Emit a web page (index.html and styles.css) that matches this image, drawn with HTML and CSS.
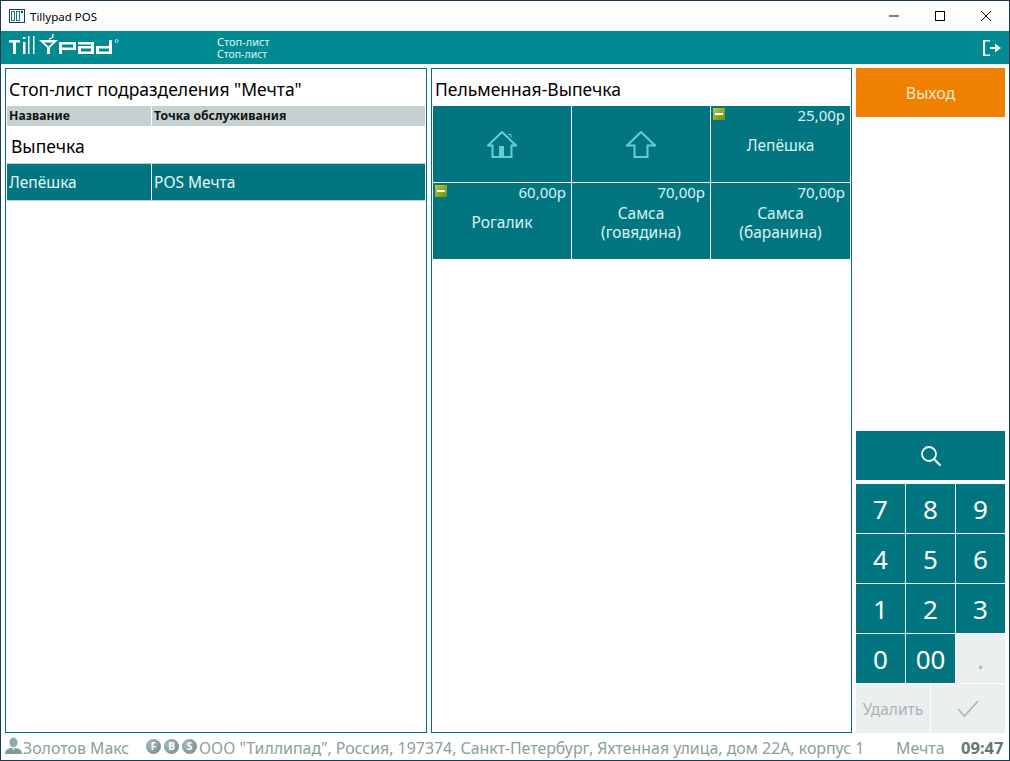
FILE: index.html
```html
<!DOCTYPE html>
<html lang="ru">
<head>
    <meta charset="UTF-8">
    <title>Tillypad POS</title>
    <link rel="stylesheet" href="styles.css">
</head>
<body>
    <div class="window">
        <div class="titlebar">
            <svg class="app-icon" width="16" height="14" viewBox="0 0 16 14">
                <rect x="0.5" y="0.5" width="15" height="13" fill="none" stroke="#1b3a52"/>
                <rect x="2.500" y="2.500" width="3" height="9" fill="none" stroke="#0e7c86"/>
                <rect x="7.500" y="2.500" width="3" height="9" fill="none" stroke="#0e7c86"/>
                <rect x="12" y="2" width="2" height="2" fill="#1b3a52"/>
            </svg>
            <span class="app-name">Tillypad POS</span>
            <div class="win-buttons">
                <svg width="46" height="30" viewBox="0 0 46 30"><path d="M18 15h10" stroke="#000"/></svg>
                <svg width="46" height="30" viewBox="0 0 46 30"><rect x="18.5" y="10.5" width="9" height="9" fill="none" stroke="#000"/></svg>
                <svg width="46" height="30" viewBox="0 0 46 30"><path d="M18 10l10 10M28 10l-10 10" stroke="#000"/></svg>
            </div>
        </div>

        <div class="topbar">
            <svg class="logo" width="110" height="21" viewBox="0 0 110 21" fill="#fff">
                <path d="M0 6h11v2.500H7V20H4V8.500H0z"/>
                <rect x="14" y="8" width="2.500" height="12"/>
                <rect x="14" y="3" width="2.500" height="2"/>
                <rect x="19" y="2" width="1.500" height="18"/>
                <rect x="24" y="2" width="1.500" height="18"/>
                <path d="M30 6h19l-8 7.500V20h-3v-6.500zM35 8.500l4.500 4 4.500-4z" fill-rule="evenodd"/>
                <path d="M40 4.500l3-1.500V0h1.500v3.500L40 6z"/>
                <path d="M50 8h17v8H53v4h-3zM53 10.500v3h11v-3z" fill-rule="evenodd"/>
                <path d="M69 8h16v12H69v-8h13v-1.500H69zM72 14.500v3h10v-3z" fill-rule="evenodd"/>
                <path d="M87 12h13V6h3v14H87zM90 14.500v3h10v-3z" fill-rule="evenodd"/>
                <circle cx="107.500" cy="7" r="1.500" fill="none" stroke="#fff" stroke-width="0.700"/>
            </svg>
            <div class="crumbs">
                <div>Стоп-лист</div>
                <div class="crumb-sub">Стоп-лист</div>
            </div>
            <svg class="logout" width="18" height="16" viewBox="0 0 18 16" fill="#fff">
                <path d="M0 0h7v1.500H2v13h5V16H0z"/>
                <path d="M7 7h5V3.500L18 8l-6 4.500V9H7z"/>
            </svg>
        </div>

        <div class="main">
            <section class="panel">
                <h2 class="panel-title">Стоп-лист подразделения "Мечта"</h2>
                <div class="tbl-head">
                    <div>Название</div>
                    <div>Точка обслуживания</div>
                </div>
                <div class="group-name">Выпечка</div>
                <div class="tbl-row">
                    <div>Лепёшка</div>
                    <div>POS Мечта</div>
                </div>
            </section>

            <section class="panel">
                <h2 class="panel-title">Пельменная-Выпечка</h2>
                <div class="tiles">
                    <div class="tile">
                        <svg class="tile-icon" width="30" height="28" viewBox="0 0 30 28" fill="none" stroke="#66cdd5" stroke-width="2">
                            <path d="M1 14.500L15 1l14 13.500h-4.500V26h-19V14.500z"/>
                            <rect x="12" y="15" width="5" height="11" fill="#66cdd5" stroke="none"/>
                            <path d="M21 3.500h3v3" stroke-width="1"/>
                        </svg>
                    </div>
                    <div class="tile">
                        <svg class="tile-icon" width="30" height="28" viewBox="0 0 30 28" fill="none" stroke="#66cdd5" stroke-width="2">
                            <path d="M1 14.500L15 1l14 13.500h-7.500V26h-13V14.500z"/>
                        </svg>
                    </div>
                    <div class="tile">
                        <span class="stop-mark"></span>
                        <span class="price">25,00р</span>
                        <span class="tile-name">Лепёшка</span>
                    </div>
                    <div class="tile">
                        <span class="stop-mark"></span>
                        <span class="price">60,00р</span>
                        <span class="tile-name">Рогалик</span>
                    </div>
                    <div class="tile">
                        <span class="price">70,00р</span>
                        <span class="tile-name">Самса<br>(говядина)</span>
                    </div>
                    <div class="tile">
                        <span class="price">70,00р</span>
                        <span class="tile-name">Самса<br>(баранина)</span>
                    </div>
                </div>
            </section>

            <aside class="side">
                <button class="exit-btn">Выход</button>
                <button class="search-btn">
                    <svg width="22" height="22" viewBox="0 0 22 22" fill="none" stroke="#fff">
                        <circle cx="9" cy="9" r="7" stroke-width="1.800"/>
                        <path d="M14 14l6.500 6.500" stroke-width="2.200"/>
                    </svg>
                </button>
                <div class="numpad">
                    <button>7</button><button>8</button><button>9</button>
                    <button>4</button><button>5</button><button>6</button>
                    <button>1</button><button>2</button><button>3</button>
                    <button>0</button><button>00</button><button class="off">.</button>
                </div>
                <div class="actions">
                    <button class="off del">Удалить</button>
                    <button class="off">
                        <svg width="22" height="18" viewBox="0 0 22 18" fill="none" stroke="#a9b5b5" stroke-width="1.600">
                            <path d="M1 9l6.500 7L21 1"/>
                        </svg>
                    </button>
                </div>
            </aside>
        </div>

        <div class="statusbar">
            <svg class="user-icon" width="17" height="17" viewBox="0 0 17 17">
                <path d="M0 17c0-3.500 2-5 6-6h5c4 1 6 2.500 6 6z" fill="#7f9a9a"/>
                <path d="M7 11h3l-1.500 3z" fill="#d5e0e0"/>
                <ellipse cx="8.500" cy="5.500" rx="4" ry="5" fill="#93abab"/>
            </svg>
            <span class="user">Золотов Макс</span>
            <span class="flags">
                <span class="flag">F</span><span class="flag">B</span><span class="flag">S</span>
            </span>
            <span class="address">ООО "Тиллипад", Россия, 197374, Санкт-Петербург, Яхтенная улица, дом 22А, корпус 1</span>
            <span class="place">Мечта</span>
            <span class="clock">09:47</span>
        </div>
    </div>
</body>
</html>
```

FILE: styles.css
```css
* {
    box-sizing: border-box;
}

body {
    margin: 0;
    font-family: "Noto Sans", sans-serif;
    background-color: #fff;
}

.window {
    width: 1010px;
    height: 761px;
    border: 1px solid #1b3a52;
    display: flex;
    flex-direction: column;
    overflow: hidden;
}

.titlebar {
    height: 30px;
    display: flex;
    align-items: center;
    padding-left: 8px;
    background-color: #fff;
}

.app-name {
    font-size: 11.5px;
    margin-left: 5px;
    color: #000;
}

.win-buttons {
    margin-left: auto;
    display: flex;
}

.win-buttons svg {
    display: block;
}

.topbar {
    height: 33px;
    background-color: #008b92;
    display: flex;
    align-items: center;
    color: #fff;
}

.logo {
    margin-left: 8px;
    margin-bottom: 6px;
}

.crumbs {
    margin-left: 98px;
    font-size: 11px;
    line-height: 13px;
    color: #e4f4f4;
}

.crumb-sub {
    font-size: 10.5px;
}

.logout {
    margin-left: auto;
    margin-right: 8px;
}

.main {
    flex: 1;
    display: flex;
    padding: 4px 4px 2px 4px;
    gap: 4px;
    min-height: 0;
}

.panel {
    width: 422px;
    border: 1px solid #00707a;
    padding: 1px;
    display: flex;
    flex-direction: column;
}

.panel + .panel {
    width: 421px;
}

.panel-title {
    margin: 0;
    height: 36px;
    padding: 8px 0 0 2px;
    font-size: 17.5px;
    line-height: 22px;
    font-weight: 400;
    color: #000;
    white-space: nowrap;
}

.tbl-head {
    display: flex;
    height: 20px;
    background-color: #c5d1d1;
    font-size: 12.2px;
    font-weight: 700;
    line-height: 20px;
    color: #111;
}

.tbl-head div:first-child,
.tbl-row div:first-child {
    width: 145px;
    border-right: 1px solid #fff;
}

.tbl-head div,
.tbl-row div {
    padding-left: 2px;
}

.group-name {
    height: 37px;
    padding-left: 4px;
    font-size: 17.5px;
    line-height: 40px;
    color: #000;
}

.tbl-row {
    display: flex;
    height: 38px;
    background-color: #017680;
    border-top: 1px solid #b9cfd0;
    border-bottom: 1px solid #b9cfd0;
    font-size: 15.5px;
    line-height: 36px;
    color: #e4f6f6;
}

.tiles {
    display: grid;
    grid-template-columns: 138px 138px 139px;
    grid-template-rows: 76px 76px;
    gap: 1px;
}

.tile {
    position: relative;
    background-color: #017680;
    color: #d9f2f3;
    display: flex;
    align-items: center;
    justify-content: center;
    text-align: center;
}

.tile-icon {
    margin-top: 1px;
}

.price {
    position: absolute;
    top: 0;
    right: 5px;
    font-size: 15px;
    line-height: 19px;
}

.tile-name {
    font-size: 15.5px;
    line-height: 19px;
    margin-top: 3px;
}

.stop-mark {
    position: absolute;
    top: 2px;
    left: 2px;
    width: 12px;
    height: 12px;
    background: linear-gradient(135deg, #b4cc3c, #6f8a12);
}

.stop-mark::after {
    content: "";
    position: absolute;
    left: 2px;
    top: 5px;
    width: 8px;
    height: 2px;
    background-color: #fff;
}

button {
    font-family: inherit;
    border: none;
    padding: 0;
    color: #fff;
    background-color: #017680;
}

.side {
    flex: 1;
    display: flex;
    flex-direction: column;
}

.exit-btn {
    height: 49px;
    background-color: #f08000;
    color: #fbe6cf;
    font-size: 16px;
}

.search-btn {
    margin-top: auto;
    height: 49px;
    display: flex;
    align-items: center;
    justify-content: center;
}

.numpad {
    margin-top: 4px;
    display: grid;
    grid-template-columns: 49px 49px 49px;
    grid-auto-rows: 49px;
    gap: 1px;
}

.numpad button {
    font-size: 26px;
    padding-top: 1px;
}

.actions {
    margin-top: 1px;
    display: grid;
    grid-template-columns: 74px 74px;
    height: 49px;
    gap: 1px;
}

.off {
    background-color: #ebefef;
    color: #a9b5b5;
    display: flex;
    align-items: center;
    justify-content: center;
}

.del {
    font-size: 15.5px;
}

.statusbar {
    height: 25px;
    display: flex;
    align-items: center;
    padding: 0 4px 0 4px;
    font-size: 15.9px;
    color: #8ba0a0;
    white-space: nowrap;
    background-color: #fff;
}

.user-icon {
    margin-top: -4px;
}

.user {
    margin-left: 1px;
    width: 123px;
}

.flags {
    display: flex;
    gap: 3px;
    margin-top: -3px;
}

.flag {
    width: 15px;
    height: 15px;
    border-radius: 50%;
    background: radial-gradient(circle at 35% 35%, #a8bcbc, #6d8585);
    color: #fff;
    font-size: 10px;
    font-weight: 700;
    line-height: 15px;
    text-align: center;
}

.address {
    margin-left: 2px;
    width: 697px;
}

.place {
    width: 65px;
}

.clock {
    font-size: 16.5px;
    font-weight: 700;
    color: #63777a;
}
```
